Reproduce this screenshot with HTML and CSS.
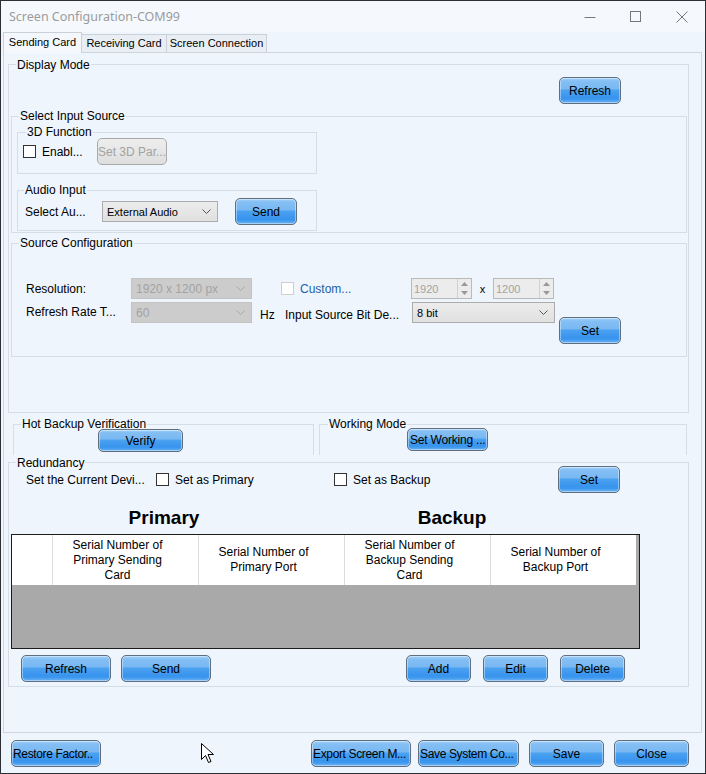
FILE: index.html
```html
<!DOCTYPE html>
<html lang="en">
<head>
  <meta charset="UTF-8">
  <title>Screen Configuration-COM99</title>
  <link rel="stylesheet" href="styles.css">
</head>
<body>
  <div class="window">
    <!-- Title bar -->
    <div class="titlebar">
      <span class="title">Screen Configuration-COM99</span>
      <div class="controls">
        <span class="ctl"><svg width="12" height="12" viewBox="0 0 12 12"><path d="M0.5 6.5h11" stroke="#777" fill="none"/></svg></span>
        <span class="ctl"><svg width="12" height="12" viewBox="0 0 12 12"><rect x="0.5" y="0.5" width="10" height="10" stroke="#777" fill="none"/></svg></span>
        <span class="ctl"><svg width="12" height="12" viewBox="0 0 12 12"><path d="M0.5 0.5l11 11M11.5 0.5l-11 11" stroke="#777" fill="none"/></svg></span>
      </div>
    </div>

    <!-- Tabs -->
    <div class="tabs">
      <span class="tab active t79">Sending Card</span>
      <span class="tab t86">Receiving Card</span>
      <span class="tab t101">Screen Connection</span>
    </div>

    <div class="pane">
      <!-- Display Mode -->
      <div class="group display-mode">
        <div class="caption">Display Mode</div>
        <div class="refresh-row"><button class="btn w62">Refresh</button></div>

        <div class="group input-source">
          <div class="caption">Select Input Source</div>

          <div class="group sub-3d">
            <div class="caption">3D Function</div>
            <div class="row row-3d">
              <span class="check"></span>
              <span class="enable-label">Enabl...</span>
              <button class="btn disabled w70">Set 3D Par...</button>
            </div>
          </div>

          <div class="group sub-audio">
            <div class="caption">Audio Input</div>
            <div class="row row-audio">
              <span class="audio-label">Select Au...</span>
              <div class="combo w116">
                <span>External Audio</span>
                <svg width="9" height="5" viewBox="0 0 9 5"><path d="M0.5 0.5l4 4 4-4" stroke="#555" fill="none"/></svg>
              </div>
              <button class="btn w62 send-btn">Send</button>
            </div>
          </div>
        </div>

        <div class="group source-config">
          <div class="caption">Source Configuration</div>
          <div class="row cfg-row1">
            <span class="cfg-label">Resolution:</span>
            <div class="combo off w121">
              <span>1920 x 1200 px</span>
              <svg width="9" height="5" viewBox="0 0 9 5"><path d="M0.5 0.5l4 4 4-4" stroke="#aaa" fill="none"/></svg>
            </div>
            <div class="custom">
              <span class="check off"></span>
              <span class="custom-label">Custom...</span>
            </div>
            <div class="spin">
              <span>1920</span>
              <span class="spin-arrows">
                <svg width="7" height="4" viewBox="0 0 7 4"><path d="M0 4h7L3.5 0z" fill="#999"/></svg>
                <svg width="7" height="4" viewBox="0 0 7 4"><path d="M0 0h7L3.5 4z" fill="#999"/></svg>
              </span>
            </div>
            <span class="times">x</span>
            <div class="spin">
              <span>1200</span>
              <span class="spin-arrows">
                <svg width="7" height="4" viewBox="0 0 7 4"><path d="M0 4h7L3.5 0z" fill="#999"/></svg>
                <svg width="7" height="4" viewBox="0 0 7 4"><path d="M0 0h7L3.5 4z" fill="#999"/></svg>
              </span>
            </div>
          </div>
          <div class="row cfg-row2">
            <span class="cfg-label">Refresh Rate T...</span>
            <div class="combo off w121">
              <span>60</span>
              <svg width="9" height="5" viewBox="0 0 9 5"><path d="M0.5 0.5l4 4 4-4" stroke="#aaa" fill="none"/></svg>
            </div>
            <span class="hz">Hz</span>
            <span class="bit-label">Input Source Bit De...</span>
            <div class="combo w143">
              <span>8 bit</span>
              <svg width="9" height="5" viewBox="0 0 9 5"><path d="M0.5 0.5l4 4 4-4" stroke="#555" fill="none"/></svg>
            </div>
            <button class="btn w62 set-btn">Set</button>
          </div>
        </div>
      </div>

      <!-- Hot backup / working mode -->
      <div class="backup-row">
        <div class="group open hot-backup">
          <div class="caption">Hot Backup Verification</div>
          <button class="btn verify-btn">Verify</button>
        </div>
        <div class="group open working-mode">
          <div class="caption">Working Mode</div>
          <button class="btn working-btn">Set Working ...</button>
        </div>
      </div>

      <!-- Redundancy -->
      <div class="group redundancy">
        <div class="caption">Redundancy</div>
        <div class="row device-row">
          <span class="device-label">Set the Current Devi...</span>
          <label class="opt opt-primary"><span class="check"></span>Set as Primary</label>
          <label class="opt opt-backup"><span class="check"></span>Set as Backup</label>
          <button class="btn w62">Set</button>
        </div>
        <div class="side-titles">
          <span class="side primary">Primary</span>
          <span class="side backup">Backup</span>
        </div>
        <div class="grid">
          <div class="grid-head">
            <div class="hcell first"></div>
            <div class="hcell">Serial Number of<br>Primary Sending<br>Card</div>
            <div class="hcell">Serial Number of<br>Primary Port</div>
            <div class="hcell">Serial Number of<br>Backup Sending<br>Card</div>
            <div class="hcell">Serial Number of<br>Backup Port</div>
          </div>
        </div>
        <div class="row grid-buttons">
          <button class="btn w90">Refresh</button>
          <button class="btn w90 gap10">Send</button>
          <button class="btn w65 add-btn">Add</button>
          <button class="btn w65 gap12">Edit</button>
          <button class="btn w65 gap12">Delete</button>
        </div>
      </div>
    </div>

    <!-- Dialog buttons -->
    <div class="footer">
      <button class="btn w90 left">Restore Factor..</button>
      <button class="btn w100 left export-btn">Export Screen M...</button>
      <button class="btn w101 left gap7">Save System Co...</button>
      <button class="btn w75 gap10">Save</button>
      <button class="btn w75 gap10">Close</button>
    </div>

    <svg class="cursor" width="13" height="21" viewBox="0 0 13 21">
      <path d="M0.5 0.5v16l4-4 3 7 2.5-1-3-7h5.5z" fill="#fff" stroke="#000"/>
    </svg>
  </div>
</body>
</html>
```

FILE: styles.css
```css
/* Base */
body {
  margin: 0;
  font-family: "Liberation Sans", Arial, sans-serif;
  font-size: 12px;
  color: #000;
  background: #eef5fc;
}

.window {
  position: relative;
  width: 706px;
  height: 774px;
  box-sizing: border-box;
  border: 1px solid #2c3035;
  background: #eef5fc;
  overflow: hidden;
}

/* Title bar */
.titlebar {
  display: flex;
  align-items: center;
  height: 31px;
  background: #f5f9fe;
}

.title {
  padding-left: 8px;
  font-family: "Noto Sans", "Open Sans", sans-serif;
  font-size: 12.5px;
  color: #9b9b9b;
}

.controls {
  display: flex;
  margin-left: auto;
}

.ctl {
  display: flex;
  align-items: center;
  justify-content: center;
  width: 46px;
  height: 31px;
}

/* Tabs */
.tabs {
  display: flex;
  align-items: flex-end;
  height: 20px;
  padding-left: 2px;
}

.tab {
  box-sizing: border-box;
  height: 18px;
  line-height: 17px;
  border: 1px solid #c9d0d8;
  border-bottom: none;
  background: #e9eef4;
  font-size: 11px;
  text-align: center;
  white-space: nowrap;
  margin-right: -1px;
}

.tab.active {
  height: 21px;
  line-height: 19px;
  margin-bottom: -1px;
  background: #f4f8fc;
  position: relative;
  z-index: 1;
}

.t79 { width: 79px; }
.t86 { width: 86px; }
.t101 { width: 101px; }

/* Tab page */
.pane {
  margin-left: 2px;
  width: 699px;
  height: 681px;
  box-sizing: border-box;
  border: 1px solid #cdd5de;
  background: #eef5fc;
}

/* Group boxes */
.group {
  box-sizing: border-box;
  border: 1px solid #d5dde6;
}

.group.open {
  border-bottom: none;
}

.caption {
  display: table;
  margin: -8px 0 0 7px;
  padding: 0 1px;
  line-height: 14px;
  background: #eef5fc;
}

.row {
  display: flex;
  align-items: center;
}

.display-mode {
  margin: 11px 0 0 4px;
  width: 681px;
  height: 349px;
}

.display-mode > .caption {
  margin-top: -7px;
}

.refresh-row {
  display: flex;
  justify-content: flex-end;
  padding-right: 67px;
  margin-top: 5px;
}

.input-source {
  margin: 12px 0 0 2px;
  width: 676px;
  height: 117px;
}

.sub-3d,
.sub-audio {
  margin-left: 5px;
  width: 300px;
}

.sub-3d {
  margin-top: 9px;
  height: 42px;
}

.sub-3d .caption {
  margin-left: 8px;
}

.row-3d {
  height: 27px;
  margin-top: -1px;
  padding-left: 5px;
}

.enable-label {
  width: 61px;
  padding-left: 6px;
  box-sizing: border-box;
}

.sub-audio {
  margin-top: 16px;
  height: 41px;
}

.sub-audio .caption {
  margin-left: 6px;
}

.row-audio {
  height: 27px;
  margin-top: 1px;
  padding-left: 7px;
}

.audio-label {
  width: 77px;
}

.send-btn {
  margin-left: 17px;
}

/* Source configuration */
.source-config {
  margin: 10px 0 0 2px;
  width: 676px;
  height: 114px;
}

.cfg-row1 {
  margin-top: 28px;
  padding-left: 14px;
  height: 21px;
}

.cfg-row2 {
  margin-top: 3px;
  padding-left: 14px;
  align-items: flex-start;
}

.cfg-row2 > span {
  line-height: 21px;
}

.cfg-row2 > .hz,
.cfg-row2 > .bit-label {
  padding-top: 3px;
}

.cfg-label {
  width: 105px;
}

.custom {
  display: flex;
  align-items: center;
  width: 130px;
  margin-left: 29px;
}

.custom-label {
  margin-left: 6px;
  color: #1f5ea8;
}

.times {
  width: 21px;
  text-align: center;
  font-size: 11px;
}

.hz {
  width: 25px;
  margin-left: 8px;
}

.bit-label {
  width: 127px;
}

.set-btn {
  margin: 15px 0 0 4px;
}

/* Combo boxes */
.combo {
  display: flex;
  align-items: center;
  justify-content: space-between;
  height: 21px;
  box-sizing: border-box;
  border: 1px solid #acacac;
  background: linear-gradient(#ececec, #e0e0e0);
  padding: 0 6px 0 4px;
  font-size: 11px;
}

.combo.off {
  border-color: #c3c3c3;
  background: #cccccc;
  color: #a3a3a3;
  font-size: 12px;
}

.w116 { width: 116px; }
.w121 { width: 121px; }
.w143 { width: 143px; }

/* Spin boxes */
.spin {
  display: flex;
  align-items: center;
  justify-content: space-between;
  width: 61px;
  height: 21px;
  box-sizing: border-box;
  border: 1px solid #b9b9b9;
  background: #ececec;
  color: #a3a3a3;
  padding-left: 2px;
  font-size: 11px;
}

.spin-arrows {
  display: flex;
  flex-direction: column;
  justify-content: space-around;
  align-items: center;
  width: 13px;
  height: 19px;
  border-left: 1px solid #d0d0d0;
}

/* Check boxes */
.check {
  display: inline-block;
  width: 13px;
  height: 13px;
  box-sizing: border-box;
  border: 1px solid #333;
  background: #fff;
  flex: none;
}

.check.off {
  border-color: #cfcfcf;
}

/* Buttons */
.btn {
  height: 27px;
  padding: 0;
  border: 1px solid #5f6f80;
  border-radius: 5px;
  background: linear-gradient(#a7d2f9 0%, #84bff4 12%, #79b8f2 42%, #4aa1f0 50%, #3994ee 78%, #3d98ee 86%, #70b6f4 100%);
  box-shadow: inset 0 0 0 1px rgba(255, 255, 255, 0.4);
  font-family: "Liberation Sans", Arial, sans-serif;
  font-size: 12px;
  color: #000;
  white-space: nowrap;
  overflow: hidden;
}

.btn.left {
  text-align: left;
  padding-left: 1px;
  letter-spacing: -0.35px;
}

.btn.disabled {
  border-color: #a9a9a9;
  background: linear-gradient(#eeeeee, #dedede);
  color: #a2a2a2;
  box-shadow: none;
}

.w62 { width: 62px; }
.w65 { width: 65px; }
.w70 { width: 70px; }
.w75 { width: 75px; }
.w90 { width: 90px; }
.w100 { width: 100px; }
.w101 { width: 101px; }

.gap7 { margin-left: 7px; }
.gap10 { margin-left: 10px; }
.gap12 { margin-left: 12px; }

/* Hot backup and working mode */
.backup-row {
  display: flex;
  margin: 11px 0 0 9px;
}

.hot-backup {
  width: 301px;
  height: 31px;
}

.working-mode {
  width: 368px;
  height: 31px;
  margin-left: 5px;
}

.verify-btn {
  display: block;
  width: 85px;
  height: 23px;
  margin: -2px 0 0 84px;
}

.working-btn {
  display: block;
  width: 81px;
  height: 23px;
  margin: -3px 0 0 87px;
  text-align: left;
  padding-left: 2px;
  letter-spacing: -0.2px;
}

.working-mode .caption {
  margin-left: 8px;
}

/* Redundancy */
.redundancy {
  margin: 7px 0 0 4px;
  width: 681px;
  height: 225px;
}

.redundancy > .caption {
  margin-top: -7px;
}

.device-row {
  height: 27px;
  margin-top: -4px;
  padding-left: 17px;
}

.device-label {
  width: 130px;
}

.opt {
  display: flex;
  align-items: center;
  gap: 6px;
}

.opt-primary { width: 178px; }
.opt-backup { width: 224px; }

.side-titles {
  display: flex;
  margin-top: 14px;
  height: 22px;
}

.side {
  font-size: 19px;
  font-weight: bold;
  text-align: center;
  line-height: 22px;
}

.side.primary { width: 310px; }
.side.backup { width: 266px; }

.grid {
  margin: 5px 0 0 2px;
  width: 629px;
  height: 115px;
  box-sizing: border-box;
  border: 1px solid #1c1c1c;
  background: #a9a9a9;
}

.grid-head {
  display: flex;
  width: 624px;
  height: 50px;
  background: #fff;
}

.hcell {
  display: flex;
  align-items: center;
  justify-content: center;
  width: 146px;
  padding-right: 16px;
  border-left: 1px solid #dcdcdc;
  box-sizing: border-box;
  text-align: center;
  line-height: 15px;
}

.hcell.first {
  width: 40px;
  padding-right: 0;
  border-left: none;
}

.grid-buttons {
  margin-top: 6px;
  padding-left: 12px;
}

.add-btn {
  margin-left: 195px;
}

/* Footer */
.footer {
  display: flex;
  padding: 7px 0 0 10px;
}

.export-btn {
  margin-left: 210px;
}

.cursor {
  position: absolute;
  left: 200px;
  top: 742px;
}
```
